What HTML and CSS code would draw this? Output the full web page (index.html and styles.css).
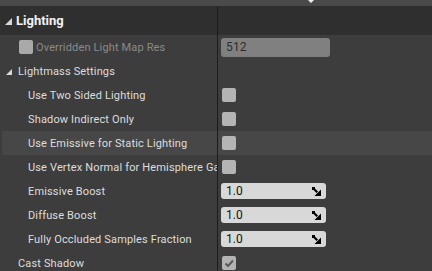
FILE: index.html
```html
<!DOCTYPE html>
<html lang="en">
<head>
    <meta charset="UTF-8">
    <title>Lighting Details</title>
    <link rel="stylesheet" href="styles.css">
</head>
<body>
    <div class="topbar"><span class="marker"></span></div>

    <div class="details">
        <div class="row category">
            <div class="name"><span class="arrow"></span>Lighting</div>
            <div class="value"></div>
        </div>

        <div class="row">
            <div class="name level1 disabled"><span class="checkbox dim"></span>Overridden Light Map Res</div>
            <div class="value"><div class="textbox">512</div></div>
        </div>

        <div class="row">
            <div class="name group"><span class="arrow small"></span>Lightmass Settings</div>
            <div class="value"></div>
        </div>

        <div class="row">
            <div class="name level2">Use Two Sided Lighting</div>
            <div class="value"><span class="checkbox"></span></div>
        </div>
        <div class="row">
            <div class="name level2">Shadow Indirect Only</div>
            <div class="value"><span class="checkbox"></span></div>
        </div>
        <div class="row hover">
            <div class="name level2">Use Emissive for Static Lighting</div>
            <div class="value"><span class="checkbox"></span></div>
        </div>
        <div class="row">
            <div class="name level2">Use Vertex Normal for Hemisphere Gather</div>
            <div class="value"><span class="checkbox"></span></div>
        </div>

        <div class="row">
            <div class="name level2">Emissive Boost</div>
            <div class="value">
                <div class="spinbox">1.0
                    <svg class="spin-icon" width="9" height="9" viewBox="0 0 9 9"><path d="M0 0 H3 V1.5 L6 4.5 L4.5 6 L1.5 3 H0 Z" fill="#000"/><polygon points="9,2.5 9,9 2.5,9" fill="#000"/></svg>
                </div>
            </div>
        </div>
        <div class="row">
            <div class="name level2">Diffuse Boost</div>
            <div class="value">
                <div class="spinbox">1.0
                    <svg class="spin-icon" width="9" height="9" viewBox="0 0 9 9"><path d="M0 0 H3 V1.5 L6 4.5 L4.5 6 L1.5 3 H0 Z" fill="#000"/><polygon points="9,2.5 9,9 2.5,9" fill="#000"/></svg>
                </div>
            </div>
        </div>
        <div class="row">
            <div class="name level2">Fully Occluded Samples Fraction</div>
            <div class="value">
                <div class="spinbox">1.0
                    <svg class="spin-icon" width="9" height="9" viewBox="0 0 9 9"><path d="M0 0 H3 V1.5 L6 4.5 L4.5 6 L1.5 3 H0 Z" fill="#000"/><polygon points="9,2.5 9,9 2.5,9" fill="#000"/></svg>
                </div>
            </div>
        </div>

        <div class="row">
            <div class="name group">Cast Shadow</div>
            <div class="value">
                <span class="checkbox checked">
                    <svg width="14" height="14" viewBox="0 0 14 14"><path d="M3.5 7.5 L6 10 L11 4.5" fill="none" stroke="#5a5a5a" stroke-width="2"/></svg>
                </span>
            </div>
        </div>
    </div>
</body>
</html>
```

FILE: styles.css
```css
* {
    margin: 0;
    padding: 0;
    box-sizing: border-box;
}

body {
    background: #3d3d3d;
    font-family: Roboto, "Liberation Sans", sans-serif;
    font-size: 11px;
    letter-spacing: 0.15px;
    color: #dedede;
    overflow: hidden;
}

.topbar {
    height: 6px;
    background: #4a4a4a;
    position: relative;
}

/* little notch from the panel above */
.topbar .marker {
    position: absolute;
    left: 308px;
    top: 0;
    width: 0;
    height: 0;
    border-left: 3px solid transparent;
    border-right: 3px solid transparent;
    border-top: 3px solid #f0f0f0;
}

.row {
    display: grid;
    grid-template-columns: 217px 1px 1fr;
    height: 24px;
}

.row::before {
    content: "";
    grid-column: 2;
    grid-row: 1;
    background: #1c1c1c;
}

.name {
    grid-column: 1;
    grid-row: 1;
    display: flex;
    align-items: center;
    white-space: nowrap;
    overflow: hidden;
}

.value {
    grid-column: 3;
    grid-row: 1;
    display: flex;
    align-items: center;
    padding-left: 3px;
}

.row.category {
    height: 29px;
    background: #2f2f2f;
}

.category .name {
    padding-left: 5px;
    font-size: 13px;
    font-weight: bold;
    letter-spacing: 0;
    color: #f2f2f2;
}

.arrow {
    width: 0;
    height: 0;
    border-left: 7px solid transparent;
    border-bottom: 7px solid #d8d8d8;
    margin-right: 4px;
    margin-top: 1px;
}

.arrow.small {
    border-left-width: 6px;
    border-bottom-width: 6px;
    margin-right: 6px;
}

.name.group {
    padding-left: 6px;
}

.name.group:not(:has(.arrow)) {
    padding-left: 18px;
}

.name.level1 {
    padding-left: 19px;
}

.name.level2 {
    padding-left: 28px;
}

.disabled {
    color: #8a8a8a;
}

.row.hover {
    background: #474747;
    margin-left: 2px;
    grid-template-columns: 215px 1px 1fr;
}

.row.hover .name.level2 {
    padding-left: 26px;
}

.checkbox {
    display: inline-block;
    width: 14px;
    height: 14px;
    border-radius: 2px;
    background: #b4b4b4;
    margin-left: 1px;
}

.checkbox.dim {
    background: #a9a9a9;
    margin-left: 0;
    margin-right: 3px;
}

.checkbox svg {
    display: block;
}

.textbox {
    width: 109px;
    height: 19px;
    background: #808080;
    border-radius: 3px;
    color: #2e2e2e;
    font-size: 12px;
    padding-left: 5px;
    line-height: 19px;
}

.spinbox {
    width: 105px;
    height: 16px;
    background: #d8d8d8;
    border-radius: 3px;
    color: #111;
    font-size: 12px;
    letter-spacing: 0;
    padding-left: 5px;
    padding-right: 5px;
    line-height: 16px;
    display: flex;
    justify-content: space-between;
    align-items: center;
}
```
